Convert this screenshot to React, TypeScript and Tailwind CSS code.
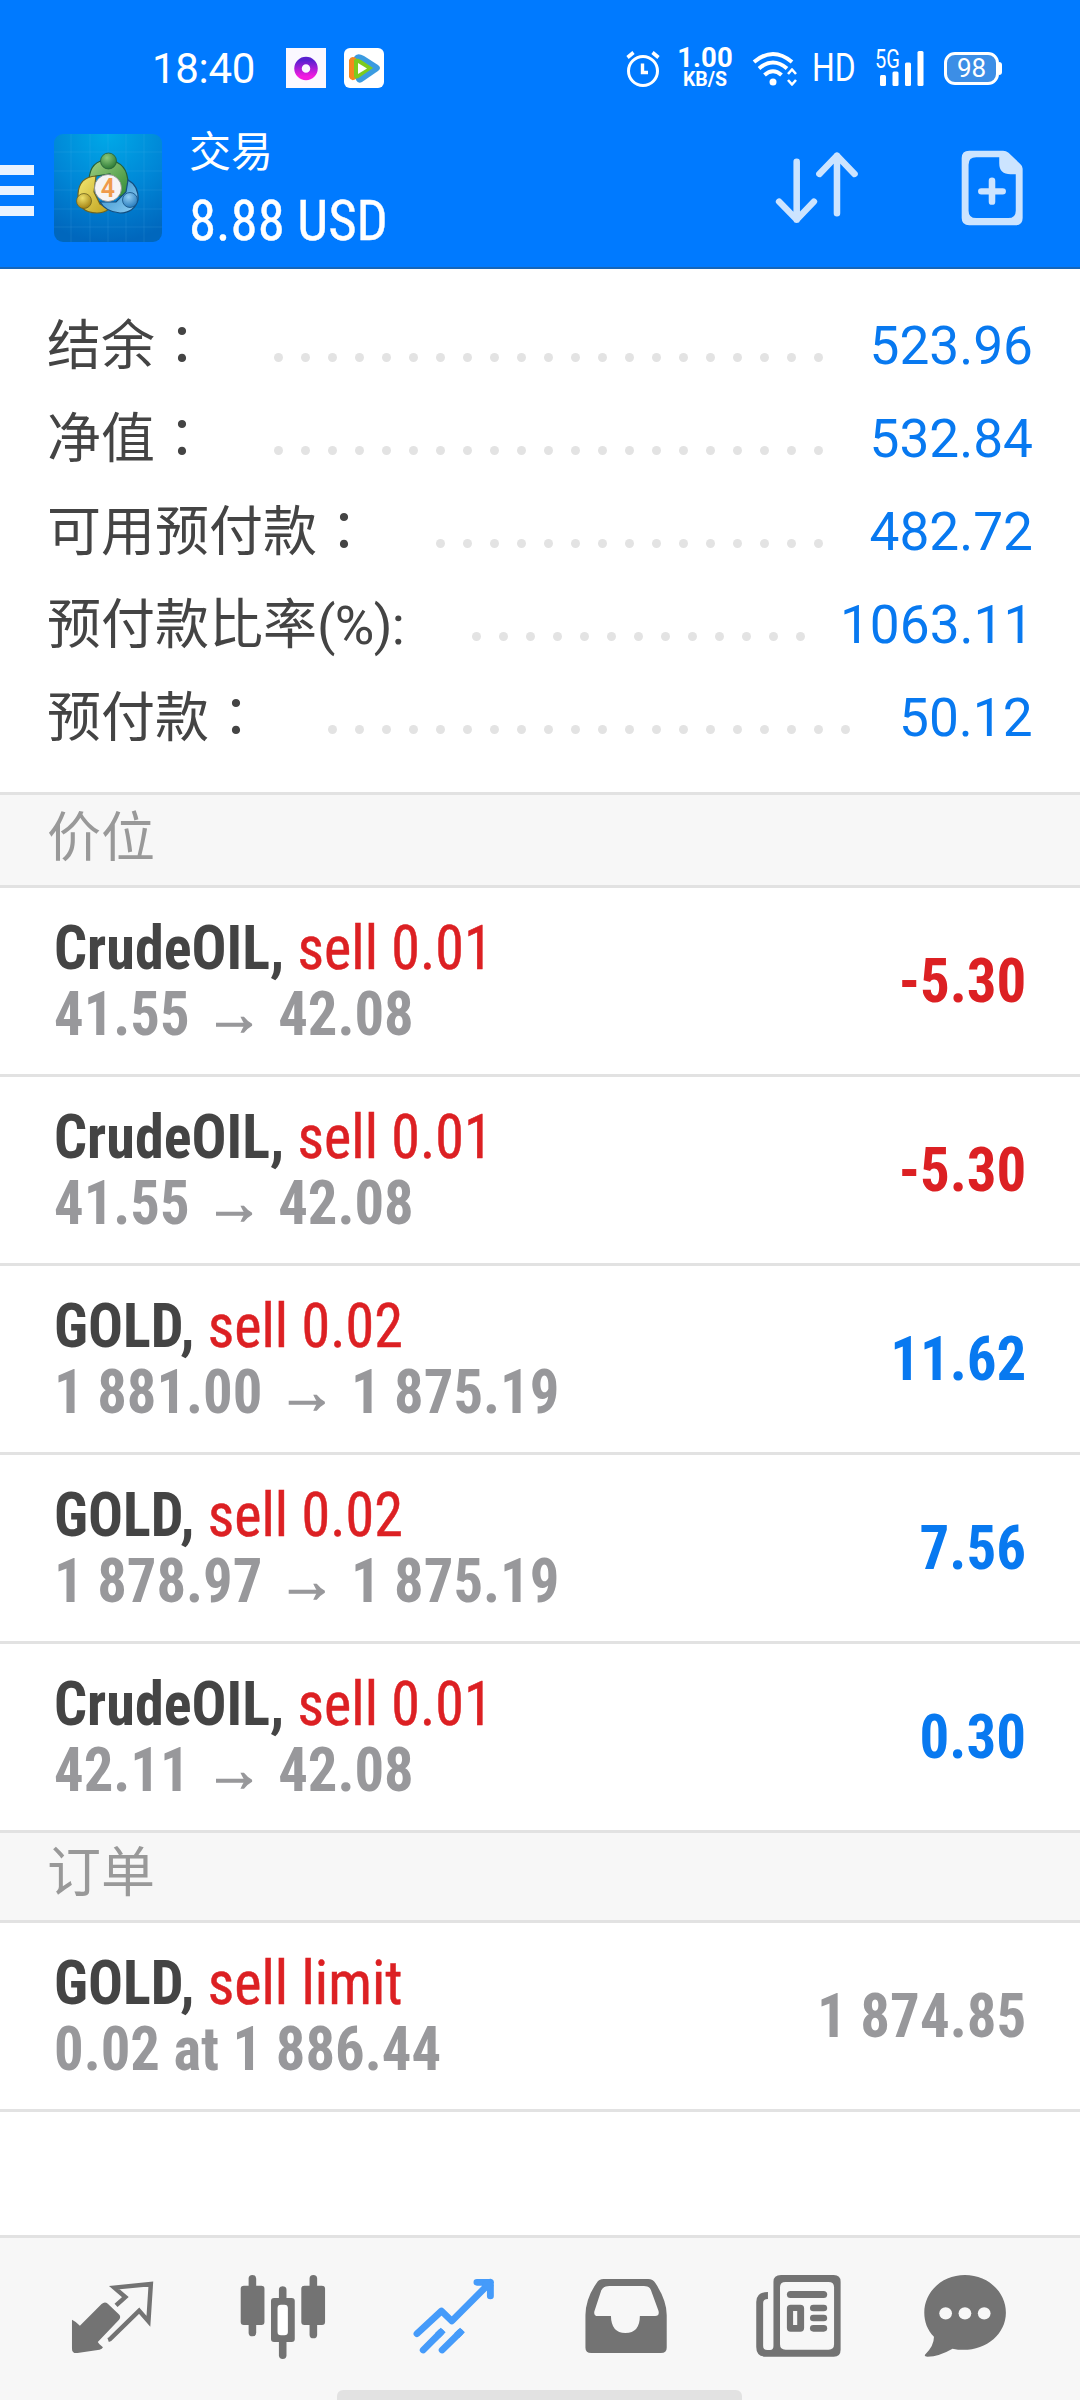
import React from "react";

const FONT = "font-['Roboto','Noto_Sans_CJK_TC',sans-serif]";

type SummaryItem = { label: string; suffix?: string; dots: number; value: string };
const summary: SummaryItem[] = [
  { label: "结余：", dots: 21, value: "523.96" },
  { label: "净值：", dots: 21, value: "532.84" },
  { label: "可用预付款：", dots: 15, value: "482.72" },
  { label: "预付款比率", suffix: "(%):", dots: 13, value: "1063.11" },
  { label: "预付款：", dots: 20, value: "50.12" },
];

type Trade = { symbol: string; action: string; from: string; to: string; profit: string };
const trades: Trade[] = [
  { symbol: "CrudeOIL,", action: "sell 0.01", from: "41.55", to: "42.08", profit: "-5.30" },
  { symbol: "CrudeOIL,", action: "sell 0.01", from: "41.55", to: "42.08", profit: "-5.30" },
  { symbol: "GOLD,", action: "sell 0.02", from: "1 881.00", to: "1 875.19", profit: "11.62" },
  { symbol: "GOLD,", action: "sell 0.02", from: "1 878.97", to: "1 875.19", profit: "7.56" },
  { symbol: "CrudeOIL,", action: "sell 0.01", from: "42.11", to: "42.08", profit: "0.30" },
];

function StatusBar() {
  return (
    <div className="mt-[46px] flex h-11 items-center text-white">
      <div className="ml-[152px] w-[134px] pt-px text-[42px] font-normal leading-[44px] tracking-[-0.3px]">18:40</div>
      <svg width="40" height="40" viewBox="0 0 40 40">
        <defs>
          <linearGradient id="ring" x1="0" y1="0" x2="0" y2="1">
            <stop offset="0" stopColor="#5a1fd0" />
            <stop offset="1" stopColor="#f41be0" />
          </linearGradient>
        </defs>
        <rect width="40" height="40" fill="#fbf8ff" />
        <circle cx="20" cy="20.5" r="8" fill="none" stroke="url(#ring)" strokeWidth="7.5" />
      </svg>
      <svg width="40" height="40" viewBox="0 0 40 40" className="ml-[18px]">
        <rect width="40" height="40" rx="6" fill="#fff" />
        <path d="M10 9Q13 4 20 8L34 17Q38 20 34 23L18 34Q14 36 12 32Z" fill="#3b9be0" />
        <path d="M5 12Q7 7 12 10V31Q7 34 5 29Z" fill="#f5871f" />
        <path d="M10 12Q12 9 17 12L29 20L16 29Q12 32 10 29Z" fill="#7ccb1e" />
        <path d="M14 15L23 20.5L14 26Z" fill="#fff" />
      </svg>
      <svg width="34" height="38" viewBox="0 0 34 38" className="ml-[242px]" fill="none" stroke="#fff" strokeWidth="3">
        <circle cx="17" cy="22" r="14.5" />
        <path d="M16.5 14.5V23.5H22" strokeWidth="3.4" />
        <path d="M1.5 8.5L7.5 3.5M32.5 8.5L26.5 3.5" strokeWidth="3.6" />
      </svg>
      <div className="ml-[16px] flex w-[58px] flex-col items-center font-bold">
        <span className="text-[27.5px] leading-[24px]">1.00</span>
        <span className="text-[19.5px] leading-[20px]">KB/S</span>
      </div>
      <svg width="46" height="38" viewBox="0 0 46 38" className="ml-[18px]" fill="none" stroke="#fff">
        <path d="M2 13Q21 -3 40 13" strokeWidth="4" />
        <path d="M7 19.5Q21 7.5 35 19.5" strokeWidth="4" />
        <path d="M12.5 26Q21 18.5 29.5 26" strokeWidth="4" />
        <circle cx="21" cy="33" r="3.5" fill="#fff" stroke="none" />
        <path d="M36 25L40 20.5L44 25M36 31L40 35.5L44 31" strokeWidth="2.6" strokeLinejoin="round" />
      </svg>
      <div className="ml-[14px] w-[46px] text-[38px] font-normal leading-[44px]">
        <span className="inline-block origin-left scale-x-[0.84]">HD</span>
      </div>
      <div className="relative ml-[16px] h-[38px] w-[51px]">
        <span className="absolute -top-[2px] left-px origin-left scale-x-[0.8] text-[25px] leading-[25px]">5G</span>
        <svg width="51" height="38" viewBox="0 0 51 38" fill="#fff">
          <rect x="6" y="26" width="6" height="11" rx="1.5" />
          <rect x="18.5" y="22.5" width="6" height="14.5" rx="1.5" />
          <rect x="31" y="13.5" width="6" height="23.5" rx="1.5" />
          <rect x="43.5" y="2" width="6" height="35" rx="1.5" />
        </svg>
      </div>
      <div className="ml-[19px] flex items-center">
        <div className="flex h-[33px] w-[55px] items-center justify-center rounded-[11px] border-[3px] border-white bg-[#3c8ee6] text-[26px] font-normal leading-none">98</div>
        <div className="h-[13px] w-[3px] rounded-r bg-white" />
      </div>
    </div>
  );
}

function AppLogo() {
  return (
    <svg width="108" height="108" viewBox="0 0 108 108" className="ml-5">
      <defs>
        <radialGradient id="logoBg" cx="0.5" cy="0" r="1">
          <stop offset="0" stopColor="#00a9e8" />
          <stop offset="0.55" stopColor="#0086d6" />
          <stop offset="1" stopColor="#0067bd" />
        </radialGradient>
        <linearGradient id="green" x1="0" y1="0" x2="1" y2="1">
          <stop offset="0" stopColor="#a3d183" />
          <stop offset="1" stopColor="#2f8a35" />
        </linearGradient>
        <linearGradient id="yellow" x1="0" y1="0" x2="1" y2="1">
          <stop offset="0" stopColor="#f3e873" />
          <stop offset="1" stopColor="#c0a11c" />
        </linearGradient>
        <linearGradient id="blue" x1="0" y1="0" x2="1" y2="1">
          <stop offset="0" stopColor="#2a86c4" />
          <stop offset="1" stopColor="#8fd0f5" />
        </linearGradient>
        <radialGradient id="greenHead" cx="0.4" cy="0.3" r="0.7">
          <stop offset="0" stopColor="#8cc97c" />
          <stop offset="1" stopColor="#2c7a35" />
        </radialGradient>
        <radialGradient id="yellowHead" cx="0.4" cy="0.3" r="0.7">
          <stop offset="0" stopColor="#efe06a" />
          <stop offset="1" stopColor="#a58414" />
        </radialGradient>
        <radialGradient id="blueHead" cx="0.4" cy="0.3" r="0.7">
          <stop offset="0" stopColor="#93d0f5" />
          <stop offset="1" stopColor="#2a7dbd" />
        </radialGradient>
      </defs>
      <rect width="108" height="108" rx="9" fill="url(#logoBg)" />
      <path
        d="M17 0V108M36 0V108M54 0V108M72 0V108M90 0V108M0 18H108M0 37H108M0 56H108M0 75H108M0 93H108"
        stroke="#5cc4f2"
        strokeOpacity="0.15"
      />
      <path d="M35 46Q36 26 54 26Q74 28 74 50Q74 58 70 62L62 62L56 40L42 42Z" fill="url(#green)" stroke="#25603a" strokeWidth="1.2" />
      <path d="M42 42Q25 43 24 60Q24 79 43 79Q50 79 55 75L46 70L40 58Z" fill="url(#yellow)" stroke="#6e6420" strokeWidth="1.2" />
      <path d="M74 46Q85 52 84 66Q80 79 66 79Q52 78 46 68L62 68L72 58Z" fill="url(#blue)" stroke="#144f80" strokeWidth="1.2" />
      <circle cx="54.5" cy="27" r="8" fill="url(#greenHead)" stroke="#25603a" strokeWidth="0.8" />
      <circle cx="30" cy="67" r="7.5" fill="url(#yellowHead)" stroke="#6e6420" strokeWidth="0.8" />
      <circle cx="76" cy="66" r="7.5" fill="url(#blueHead)" stroke="#144f80" strokeWidth="0.8" />
      <circle cx="54" cy="54" r="13.5" fill="#f6f3f4" stroke="#8d8d8d" strokeWidth="0.8" />
      <text x="54" y="62.5" textAnchor="middle" fontSize="25" fontWeight="600" fill="#ef9a4b" fontFamily="Roboto, sans-serif">4</text>
    </svg>
  );
}

function Header() {
  return (
    <header className="h-[269px] border-b-2 border-[#1566ba] bg-[#007aff]">
      <div className="flex flex-col">
        <StatusBar />
        <div className="mt-[40px] flex h-[116px] items-start text-white">
          <div className="mt-[35px] flex w-[34px] flex-col gap-[11px]">
            <div className="h-[9.5px] bg-[#e9f3ff]" />
            <div className="h-[9.5px] bg-[#e9f3ff]" />
            <div className="h-[9.5px] bg-[#e9f3ff]" />
          </div>
          <div className="mt-1">
            <AppLogo />
          </div>
          <div className="ml-[27px] w-[400px] whitespace-nowrap">
            <div className="pt-px text-[42px] leading-[44px]">交易</div>
            <div className="mt-[13px] w-fit origin-left scale-x-[0.98] text-[56px] font-normal leading-[66px] [-webkit-text-stroke:0.4px_#fff] [font-stretch:75%]">8.88 USD</div>
          </div>
          <svg width="84" height="76" viewBox="683 449 244 228" preserveAspectRatio="none" className="ml-[186px] mt-[20px]" fill="none" stroke="#cce4ff" strokeWidth="19" strokeLinecap="round" strokeLinejoin="round">
            <path d="M746 484V658M695 604L746 658L796 604" />
            <path d="M863 639V466M812 521L863 466L914 521" />
          </svg>
          <svg width="62" height="76" viewBox="1222 450 180 228" preserveAspectRatio="none" className="ml-[102px] mt-[20px]">
            <path
              fillRule="evenodd"
              fill="#cce4ff"
              d="M1246 452H1344Q1353 452 1360 458L1394 492Q1401 498 1401 506V654Q1401 676 1379 676H1246Q1224 676 1224 654V474Q1224 452 1246 452ZM1266 472Q1244 472 1244 494V632Q1244 654 1266 654H1359Q1381 654 1381 632V523H1366Q1333 523 1333 490V472Z"
            />
            <path d="M1312 542V605M1281 574H1343" stroke="#cce4ff" strokeWidth="19" strokeLinecap="round" />
          </svg>
        </div>
      </div>
    </header>
  );
}

function SummaryRow({ label, suffix, dots, value }: SummaryItem) {
  return (
    <div className="flex h-[93px] items-center pl-[47px] pr-[47px] text-[54px] leading-[93px]">
      <span className="whitespace-nowrap pt-[2px] text-[#444]">
        {label}
        {suffix && <span className="mr-[3px] tracking-[-0.7px]">{suffix}</span>}
      </span>
      <div className="ml-[65px] mt-[24px] flex gap-[18px]">
        {Array.from({ length: dots }, (_, i) => (
          <span key={i} className="size-[9px] rounded-full bg-[#e3e3e3]" />
        ))}
      </div>
      <span className="ml-auto origin-right scale-x-[0.985] text-[#0879f0]">{value}</span>
    </div>
  );
}

function Row({ title, action, detail, value, color }: { title: string; action: string; detail: React.ReactNode; value: string; color: string }) {
  return (
    <div className="flex h-[189px] items-center justify-between border-b-[3px] border-[#e2e2e2] px-[54px] text-[62px] leading-[66px] [font-stretch:75%]">
      <div className="whitespace-nowrap">
        <div className="h-[66px] w-fit origin-left scale-x-[0.937] text-[#dc2023]">
          <span className="font-bold text-[#444]">{title}</span> <span className="[-webkit-text-stroke:0.5px_#dc2023]">{action}</span>
        </div>
        <div className="h-[66px] w-fit origin-left scale-x-[0.946] font-bold text-[#98989b]">{detail}</div>
      </div>
      <span className={"origin-right scale-x-[0.95] font-bold " + color}>{value}</span>
    </div>
  );
}

function BottomBar() {
  const G = "#737373";
  return (
    <nav className="relative mt-auto flex h-[165px] border-t-[3px] border-[#e2e2e2] bg-[#f7f7f7] px-[27px]">
      <svg width="171" height="162" viewBox="78.4 54 496.6 486" preserveAspectRatio="none">
        <path d="M209 299Q220 304 232 317L295 252Q304 243 313 251L345 283Q353 291 345 300L284 366Q287 373 299 382Q297 387 289 389L225 399Q209 401 209 386Z" fill={G} />
        <path d="M337 256L364 231L332 203L438 192L431 304L404 272L323 354Q320 358 314 360" fill="none" stroke={G} strokeWidth="13" />
      </svg>
      <svg width="171" height="162" viewBox="575 54 496.6 486" preserveAspectRatio="none" fill={G}>
        <rect x="722" y="165" width="22" height="184" rx="11" />
        <rect x="699" y="197" width="69" height="118" rx="9" />
        <rect x="899" y="165" width="22" height="190" rx="11" />
        <rect x="875" y="197" width="69" height="118" rx="9" />
        <rect x="810" y="199" width="22" height="218" rx="11" />
        <rect x="787" y="234" width="69" height="132" rx="9" />
        <rect x="806" y="254" width="30" height="92" rx="10" fill="#fff" />
      </svg>
      <svg width="171" height="162" viewBox="1071.5 54 496.6 486" preserveAspectRatio="none" fill="none" stroke="#459bfa" strokeWidth="20" strokeLinecap="round" strokeLinejoin="round">
        <path d="M1211 341L1282 273L1312 303L1424 187M1385 187H1424V228" />
        <path d="M1424 187L1408 203" strokeWidth="28" strokeLinecap="butt" />
        <path d="M1229 390L1280 337M1284 390L1336 337" />
        <path d="M1270 347L1287 330M1326 347L1343 330" strokeLinecap="butt" />
      </svg>
      <svg width="171" height="162" viewBox="0 54 496.6 486" preserveAspectRatio="none">
        <path
          fillRule="evenodd"
          fill={G}
          d="M185 177H314Q328 177 335 189Q368 241 368 285V383Q368 399 351 399H149Q132 399 132 383V285Q133 234 165 188Q171 177 185 177ZM201 198Q184 198 178 211L158 274Q155 288 168 288H206Q207 339 248 339Q290 339 290 288H334Q348 288 344 272L322 210Q318 198 302 198Z"
        />
      </svg>
      <svg width="171" height="162" viewBox="496.6 54 496.6 486" preserveAspectRatio="none">
        <path
          fillRule="evenodd"
          fill={G}
          d="M700 165H853Q873 165 873 185V389Q873 410 853 410H656Q628 410 628 381V246Q628 216 662 216V237Q648 237 648 249V378Q648 390 660 390H668Q678 390 678 378V185Q678 165 700 165ZM713 186Q697 186 697 202V373Q697 389 713 389H838Q854 389 854 373V202Q854 186 838 186Z"
        />
        <rect x="717" y="213" width="117" height="21" rx="10.5" fill={G} />
        <path fillRule="evenodd" fill={G} d="M728 254H756Q767 254 767 265V324Q767 335 756 335H728Q717 335 717 324V265Q717 254 728 254ZM735 273V315H747V273Z" />
        <rect x="784" y="254" width="50" height="20" rx="10" fill={G} />
        <rect x="784" y="284" width="50" height="20" rx="10" fill={G} />
        <rect x="784" y="315" width="50" height="20" rx="10" fill={G} />
      </svg>
      <svg width="171" height="162" viewBox="993.2 54 496.6 486" preserveAspectRatio="none">
        <path fill={G} d="M1234 165C1300 165 1353 215 1353 278C1353 350 1280 404 1198 386Q1160 409 1125 410Q1113 409 1120 402Q1145 376 1144 350C1125 330 1116 305 1116 278C1116 215 1168 165 1234 165Z" />
        <circle cx="1178" cy="280" r="18.5" fill="#f7f7f7" />
        <circle cx="1234" cy="280" r="18.5" fill="#f7f7f7" />
        <circle cx="1290" cy="280" r="18.5" fill="#f7f7f7" />
      </svg>
      <div className="absolute bottom-0 left-[337px] h-[10px] w-[405px] rounded-t-[6px] bg-[#e2e2e2]" />
    </nav>
  );
}

export default function App() {
  return (
    <div className={"flex h-[2400px] w-[1080px] flex-col overflow-hidden bg-white " + FONT}>
      <Header />
      <section className="h-[523px] pt-[30px]">
        {summary.map((s) => (
          <SummaryRow key={s.label} {...s} />
        ))}
      </section>
      <h2 className="h-24 border-y-[3px] border-[#e2e2e2] bg-[#f7f7f7] pl-[47px] text-[54px] leading-[88px] text-[#999]">价位</h2>
      {trades.map((t, i) => (
        <Row
          key={i}
          title={t.symbol}
          action={t.action}
          value={t.profit}
          color={t.profit.startsWith("-") ? "text-[#dc2023]" : "text-[#0879f0]"}
          detail={
            <>
              {t.from} <span className="mx-[1.5px] font-['Liberation_Sans'] [-webkit-text-stroke:1.5px_#98989b]">→</span> {t.to}
            </>
          }
        />
      ))}
      <h2 className="h-[90px] border-b-[3px] border-[#e2e2e2] bg-[#f7f7f7] pl-[47px] text-[54px] leading-[82px] text-[#999]">订单</h2>
      <Row title="GOLD," action="sell limit" detail="0.02 at 1 886.44" value="1 874.85" color="text-[#98989b]" />
      <BottomBar />
    </div>
  );
}
